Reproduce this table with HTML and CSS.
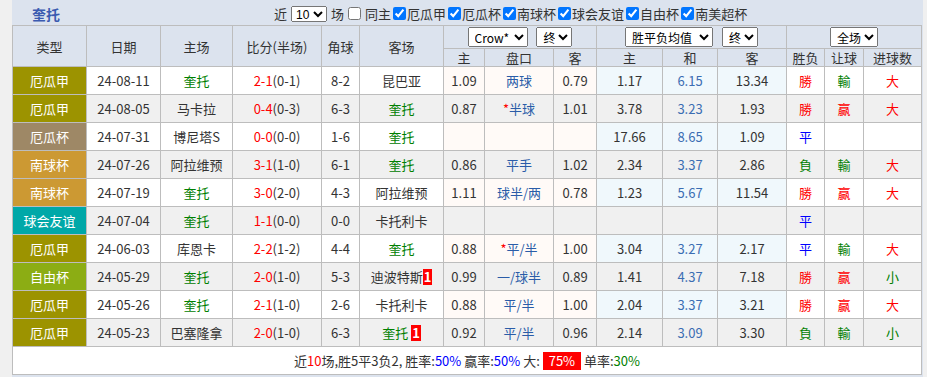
FILE: index.html
```html
<!DOCTYPE html>
<html lang="zh-CN">
<head>
    <meta charset="UTF-8">
    <title>奎托 近期战绩</title>
    <link rel="stylesheet" href="styles.css">
</head>
<body>
<div class="box">
    <div class="titlebar">
        <span class="team-title">奎托</span>
        <div class="filters">
            <span>近</span>
            <select class="sel-num"><option>10</option></select>
            <span>场</span>
            <label class="ck first"><input type="checkbox">同主</label>
            <label class="ck"><input type="checkbox" checked>厄瓜甲</label>
            <label class="ck"><input type="checkbox" checked>厄瓜杯</label>
            <label class="ck"><input type="checkbox" checked>南球杯</label>
            <label class="ck"><input type="checkbox" checked>球会友谊</label>
            <label class="ck"><input type="checkbox" checked>自由杯</label>
            <label class="ck"><input type="checkbox" checked>南美超杯</label>
        </div>
    </div>

    <table class="records">
        <colgroup>
            <col style="width:74px"><col style="width:74px"><col style="width:72px"><col style="width:89px">
            <col style="width:38px"><col style="width:84px">
            <col style="width:41px"><col style="width:69px"><col style="width:43px">
            <col style="width:66px"><col style="width:55px"><col style="width:69px">
            <col style="width:38px"><col style="width:39px"><col style="width:58px">
        </colgroup>
        <thead>
            <tr class="hd1">
                <th rowspan="2">类型</th>
                <th rowspan="2">日期</th>
                <th rowspan="2">主场</th>
                <th rowspan="2">比分<span class="half">(半场)</span></th>
                <th rowspan="2">角球</th>
                <th rowspan="2">客场</th>
                <th colspan="3">
                    <select class="sel w-crow"><option>Crow*</option></select>
                    <select class="sel w-end"><option>终</option></select>
                </th>
                <th colspan="3">
                    <select class="sel w-avg"><option>胜平负均值</option></select>
                    <select class="sel w-end"><option>终</option></select>
                </th>
                <th colspan="3">
                    <select class="sel w-full"><option>全场</option></select>
                </th>
            </tr>
            <tr class="hd2">
                <th>主</th><th>盘口</th><th>客</th>
                <th>主</th><th>和</th><th>客</th>
                <th>胜负</th><th>让球</th><th>进球数</th>
            </tr>
        </thead>
        <tbody>
            <tr>
                <td class="lg lg-a">厄瓜甲</td><td class="date">24-08-11</td><td class="me">奎托</td>
                <td><span class="ft">2-1</span>(0-1)</td><td>8-2</td><td>昆巴亚</td>
                <td class="ah">1.09</td><td class="ah line">两球</td><td class="ah">0.79</td>
                <td class="eu">1.17</td><td class="eu draw">6.15</td><td class="eu">13.34</td>
                <td class="res win">勝</td><td class="res lose">輸</td><td class="res win">大</td>
            </tr>
            <tr>
                <td class="lg lg-a">厄瓜甲</td><td class="date">24-08-05</td><td>马卡拉</td>
                <td><span class="ft">0-4</span>(0-3)</td><td>6-3</td><td class="me">奎托</td>
                <td class="ah">0.87</td><td class="ah line"><span class="star">*</span>半球</td><td class="ah">1.01</td>
                <td class="eu">3.78</td><td class="eu draw">3.23</td><td class="eu">1.93</td>
                <td class="res win">勝</td><td class="res win">赢</td><td class="res win">大</td>
            </tr>
            <tr>
                <td class="lg lg-b">厄瓜杯</td><td class="date">24-07-31</td><td>博尼塔S</td>
                <td><span class="ft">0-0</span>(0-0)</td><td>1-6</td><td class="me">奎托</td>
                <td class="ah"></td><td class="ah line"></td><td class="ah"></td>
                <td class="eu">17.66</td><td class="eu draw">8.65</td><td class="eu">1.09</td>
                <td class="res even">平</td><td class="res"></td><td class="res"></td>
            </tr>
            <tr>
                <td class="lg lg-c">南球杯</td><td class="date">24-07-26</td><td>阿拉维预</td>
                <td><span class="ft">3-1</span>(1-0)</td><td>6-1</td><td class="me">奎托</td>
                <td class="ah">0.86</td><td class="ah line">平手</td><td class="ah">1.02</td>
                <td class="eu">2.34</td><td class="eu draw">3.37</td><td class="eu">2.86</td>
                <td class="res lose">負</td><td class="res lose">輸</td><td class="res win">大</td>
            </tr>
            <tr>
                <td class="lg lg-c">南球杯</td><td class="date">24-07-19</td><td class="me">奎托</td>
                <td><span class="ft">3-0</span>(2-0)</td><td>4-3</td><td>阿拉维预</td>
                <td class="ah">1.11</td><td class="ah line">球半/两</td><td class="ah">0.78</td>
                <td class="eu">1.23</td><td class="eu draw">5.67</td><td class="eu">11.54</td>
                <td class="res win">勝</td><td class="res win">赢</td><td class="res win">大</td>
            </tr>
            <tr>
                <td class="lg lg-d">球会友谊</td><td class="date">24-07-04</td><td class="me">奎托</td>
                <td><span class="ft">1-1</span>(0-0)</td><td>0-0</td><td>卡托利卡</td>
                <td class="ah"></td><td class="ah line"></td><td class="ah"></td>
                <td class="eu"></td><td class="eu draw"></td><td class="eu"></td>
                <td class="res even">平</td><td class="res"></td><td class="res"></td>
            </tr>
            <tr>
                <td class="lg lg-a">厄瓜甲</td><td class="date">24-06-03</td><td>库恩卡</td>
                <td><span class="ft">2-2</span>(1-2)</td><td>4-4</td><td class="me">奎托</td>
                <td class="ah">0.88</td><td class="ah line"><span class="star">*</span>平/半</td><td class="ah">1.00</td>
                <td class="eu">3.04</td><td class="eu draw">3.27</td><td class="eu">2.17</td>
                <td class="res even">平</td><td class="res lose">輸</td><td class="res win">大</td>
            </tr>
            <tr>
                <td class="lg lg-e">自由杯</td><td class="date">24-05-29</td><td class="me">奎托</td>
                <td><span class="ft">2-0</span>(1-0)</td><td>5-3</td><td>迪波特斯<span class="red-card">1</span></td>
                <td class="ah">0.99</td><td class="ah line">一/球半</td><td class="ah">0.89</td>
                <td class="eu">1.41</td><td class="eu draw">4.37</td><td class="eu">7.18</td>
                <td class="res win">勝</td><td class="res win">赢</td><td class="res lose">小</td>
            </tr>
            <tr>
                <td class="lg lg-a">厄瓜甲</td><td class="date">24-05-26</td><td class="me">奎托</td>
                <td><span class="ft">2-1</span>(1-0)</td><td>2-6</td><td>卡托利卡</td>
                <td class="ah">0.88</td><td class="ah line">平/半</td><td class="ah">1.00</td>
                <td class="eu">2.04</td><td class="eu draw">3.37</td><td class="eu">3.21</td>
                <td class="res win">勝</td><td class="res win">赢</td><td class="res win">大</td>
            </tr>
            <tr>
                <td class="lg lg-a">厄瓜甲</td><td class="date">24-05-23</td><td>巴塞隆拿</td>
                <td><span class="ft">2-0</span>(1-0)</td><td>6-3</td><td class="me">奎托 <span class="red-card">1</span></td>
                <td class="ah">0.92</td><td class="ah line">平/半</td><td class="ah">0.96</td>
                <td class="eu">2.14</td><td class="eu draw">3.09</td><td class="eu">3.30</td>
                <td class="res lose">負</td><td class="res lose">輸</td><td class="res lose">小</td>
            </tr>
        </tbody>
        <tfoot>
            <tr>
                <td colspan="15" class="summary">
                    近<span class="red">10</span>场,胜5平3负2, 胜率:<span class="blue">50%</span>
                    赢率:<span class="blue">50%</span> 大: <span class="hot">75%</span> 单率:<span class="green">30%</span>
                </td>
            </tr>
        </tfoot>
    </table>
</div>
</body>
</html>
```

FILE: styles.css
```css
body {
    margin: 0;
    background: #f0f0f0;
    font-family: "Noto Sans CJK SC", "Noto Sans", sans-serif;
    font-size: 12px;
    color: #333;
}
.box {
    margin-left: 12px;
    width: 911px;
    height: 377px;
    background: #dce3ee;
}
.titlebar {
    display: flex;
    align-items: center;
    height: 25px;
    padding-top: 2px;
    box-sizing: border-box;
}
.team-title {
    width: 242px;
    padding-left: 20px;
    font-size: 14px;
    font-weight: bold;
    color: #3a5ab0;
}
.filters {
    display: flex;
    align-items: center;
    font-size: 13px;
    color: #333;
}
.sel-num {
    margin: 0 4px;
    height: 16px;
    width: 36px;
    font-size: 12px;
    padding: 0;
}
.ck {
    display: flex;
    align-items: center;
}
.ck input {
    margin: 0 1px 0 2px;
    width: 13px;
    height: 13px;
}
.ck.first input {
    margin-left: 4px;
    margin-right: 4px;
}
.records {
    width: 910px;
    table-layout: fixed;
    border-collapse: collapse;
    text-align: center;
}
.records th,
.records td {
    border: 1px solid #bdbdbd;
    padding: 0;
    white-space: nowrap;
    overflow: hidden;
}
.records th {
    font-weight: normal;
    font-size: 13px;
    color: #333;
    background: #dce3ee;
}
.hd1 th {
    height: 22px;
}
.hd2 th {
    height: 17px;
    line-height: 17px;
}
.half {
    color: #333;
}
.sel {
    height: 20px;
    font-size: 12px;
    font-family: "Noto Sans CJK SC", sans-serif;
    padding: 0 0 0 2px;
    margin: 0 3px;
}
.w-crow { width: 60px; }
.w-end { width: 36px; }
.w-avg { width: 88px; }
.w-full { width: 48px; }
.records tbody td {
    height: 27px;
    font-size: 13px;
    background: #fff;
}
.records tbody tr:nth-child(even) td {
    background: #f0f0f0;
}
.records tbody td.lg {
    color: #fff;
}
.lg-a { background: #9c9300 !important; }
.lg-b { background: #9e8866 !important; }
.lg-c { background: #cc9933 !important; }
.lg-d { background: #00a8a8 !important; }
.lg-e { background: #8cad14 !important; }
.records tbody td.ah {
    background: #fffaf7;
}
.records tbody td.eu {
    background: #f0f8fc;
}
.date {
    color: #333;
}
.me {
    color: #008000;
}
.ft {
    color: #ff0000;
}
.line {
    color: #2a5ca8;
}
.star {
    color: #ff0000;
}
.draw {
    color: #3b6db3;
}
.win { color: #ff0000; }
.lose { color: #008000; }
.even { color: #0000ff; }
.red-card {
    display: inline-block;
    background: #ff0000;
    color: #fff;
    font-weight: bold;
    line-height: 16px;
    padding: 0 1px;
}
.summary {
    height: 27px;
    background: #fff;
    font-size: 13px;
    color: #333;
}
.red { color: #ff0000; }
.blue { color: #0000ff; }
.green { color: #008000; }
.hot {
    display: inline-block;
    background: #ff0000;
    color: #fff;
    padding: 0 6px;
    line-height: 18px;
}
```
